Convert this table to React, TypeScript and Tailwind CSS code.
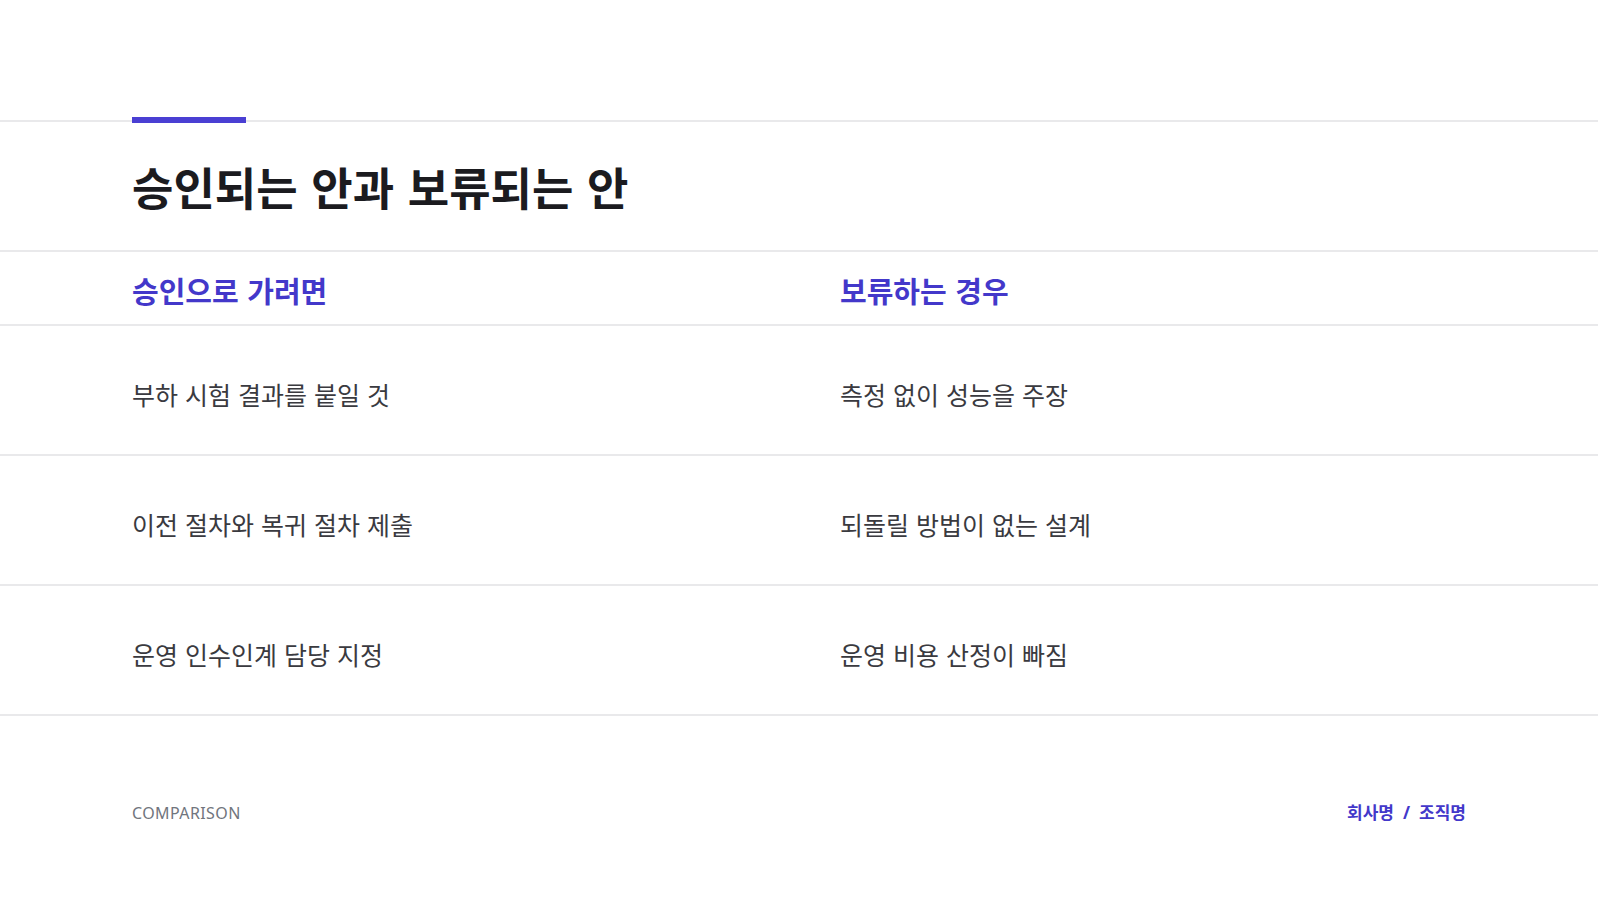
import React from "react";

const rows: [string, string][] = [
  ["부하 시험 결과를 붙일 것", "측정 없이 성능을 주장"],
  ["이전 절차와 복귀 절차 제출", "되돌릴 방법이 없는 설계"],
  ["운영 인수인계 담당 지정", "운영 비용 산정이 빠짐"],
];

export default function App() {
  return (
    <div
      className="w-[1598px] h-[900px] bg-white flex flex-col overflow-hidden"
      style={{ fontFamily: '"Noto Sans", "Noto Sans CJK KR", sans-serif' }}
    >
      <div className="h-[120px] shrink-0" />
      <div className="relative shrink-0 h-[130px] border-t-2 border-[#e9e9eb] px-[132px] flex items-center pt-[4px]">
        <div className="absolute left-[132px] top-[-5px] h-[6px] w-[114px] bg-[#4a3fd3]" />
        <h1 className="text-[45px] leading-none font-bold text-[#1b1b1f] [word-spacing:2px]">
          승인되는 안과 보류되는 안
        </h1>
      </div>
      <div className="shrink-0 h-[74px] border-t-2 border-[#e9e9eb] px-[132px] grid grid-cols-2 gap-x-[82px] items-center pt-[6px]">
        <div className="text-[29px] leading-none font-bold text-[#4338ca] [word-spacing:1px]">승인으로 가려면</div>
        <div className="text-[29px] leading-none font-bold text-[#4338ca] [word-spacing:1px]">보류하는 경우</div>
      </div>
      {rows.map(([a, b], i) => (
        <div
          key={i}
          className="shrink-0 h-[130px] border-t-2 border-[#e9e9eb] px-[132px] grid grid-cols-2 gap-x-[82px] items-center pt-[11px]"
        >
          <div className="text-[25px] leading-none text-[#3a3a3f] [word-spacing:0.5px]">{a}</div>
          <div className="text-[25px] leading-none text-[#3a3a3f] [word-spacing:0.5px]">{b}</div>
        </div>
      ))}
      <div className="shrink-0 border-t-2 border-[#e9e9eb]" />
      <div className="shrink-0 px-[132px] pt-[87px] flex items-center justify-between h-[107px]">
        <div className="text-[16px] leading-[20px] tracking-[0.025em] text-[#71757d]">COMPARISON</div>
        <div className="text-[17px] leading-[20px] font-bold text-[#4338ca] flex items-center">
          <span>회사명</span>
          <span className="mx-[9px]">/</span>
          <span>조직명</span>
        </div>
      </div>
    </div>
  );
}
